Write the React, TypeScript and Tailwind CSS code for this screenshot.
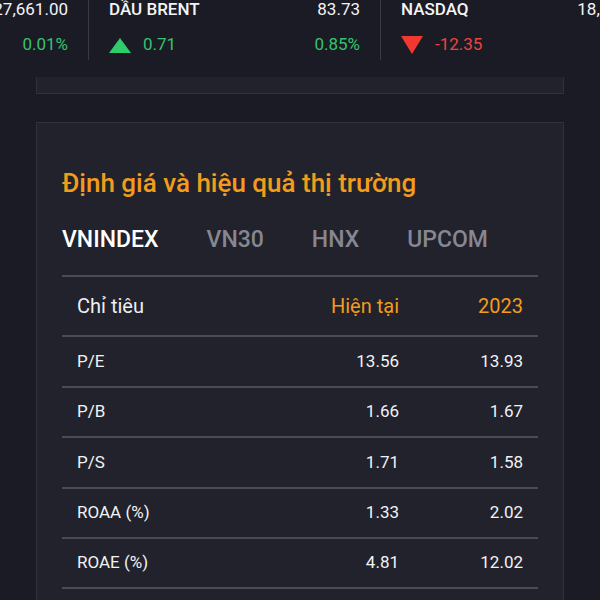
import React from "react";

const font = { fontFamily: "Roboto, 'Noto Sans', sans-serif" };

function Up() {
  return (
    <svg width="22" height="15" viewBox="0 0 22 15" className="shrink-0">
      <polygon points="11,0 22,15 0,15" fill="#2ecc6a" />
    </svg>
  );
}
function Down() {
  return (
    <svg width="22" height="18" viewBox="0 0 22 18" className="shrink-0">
      <polygon points="0,0 22,0 11,18" fill="#f2392f" />
    </svg>
  );
}

type Tick = { name: string; value: string; change: string; pct: string; up: boolean };

const ticks: Tick[] = [
  { name: "DOW JONES", value: "27,661.00", change: "2.51", pct: "0.01%", up: true },
  { name: "DẦU BRENT", value: "83.73", change: "0.71", pct: "0.85%", up: true },
  { name: "NASDAQ", value: "18,302.30", change: "-12.35", pct: "-0.07%", up: false },
];

function TickItem({ t, first }: { t: Tick; first?: boolean }) {
  const c = t.up ? "text-[#34c46d]" : "text-[#ec463d]";
  return (
    <div className={`w-[292px] shrink-0 h-[60px] flex flex-col px-5 ${first ? "" : "border-l border-[#3a3b45]"}`}>
      <div className="flex justify-between items-center h-[20px] text-[17px] text-[#f4f4f6] font-medium">
        <span>{t.name}</span>
        <span className="font-normal">{t.value}</span>
      </div>
      <div className="flex justify-between items-center h-[30px] mt-[10px] text-[17px]">
        <div className="flex items-center gap-3">
          {!first && (t.up ? <Up /> : <Down />)}
          <span className={c}>{t.change}</span>
        </div>
        <span className={c}>{t.pct}</span>
      </div>
    </div>
  );
}

const rows: [string, string, string, string][] = [
  ["P/E", "13.56", "13.93", "h-[51px]"],
  ["P/B", "1.66", "1.67", "h-[50px]"],
  ["P/S", "1.71", "1.58", "h-[51px]"],
  ["ROAA (%)", "1.33", "2.02", "h-[50px]"],
  ["ROAE (%)", "4.81", "12.02", "h-[50px]"],
];

export default function App() {
  return (
    <div className="w-[600px] h-[600px] overflow-hidden bg-[#1a1b24]" style={font}>
      <div className="h-[77px] overflow-hidden">
        <div className="flex ml-[-204px]">
          <TickItem t={ticks[0]} first />
          <TickItem t={ticks[1]} />
          <TickItem t={ticks[2]} />
        </div>
      </div>
      <div className="mx-[36px] h-[17px] bg-[#21222c] border border-t-0 border-[#30313b]" />
      <div className="mx-[36px] mt-[28px] bg-[#21222c] border border-[#30313b] px-[25px] pt-[44px] pb-10">
        <div className="text-[26px] leading-[32px] text-[#f39c1b] font-medium">
          Định giá và hiệu quả thị trường
        </div>
        <div className="flex gap-12 mt-[27px] text-[23px] leading-[28px] font-medium">
          <span className="text-white">VNINDEX</span>
          <span className="text-[#868792]">VN30</span>
          <span className="text-[#868792]">HNX</span>
          <span className="text-[#868792]">UPCOM</span>
        </div>
        <div className="mt-[21px] border-t-2 border-[#4a4b57]">
          <div className="flex items-center h-[60px] border-b-2 border-[#4a4b57] px-[15px] text-[20px]">
            <span className="flex-1 text-[#eeeef2]">Chỉ tiêu</span>
            <span className="w-[150px] text-right text-[#f39c1b]">Hiện tại</span>
            <span className="w-[124px] text-right text-[#f39c1b]">2023</span>
          </div>
          {rows.map((r) => (
            <div key={r[0]} className={`flex items-center ${r[3]} border-b-2 border-[#4a4b57] px-[15px] text-[17px] text-[#f2f2f5]`}>
              <span className="flex-1">{r[0]}</span>
              <span className="w-[150px] text-right">{r[1]}</span>
              <span className="w-[124px] text-right">{r[2]}</span>
            </div>
          ))}
        </div>
      </div>
    </div>
  );
}
